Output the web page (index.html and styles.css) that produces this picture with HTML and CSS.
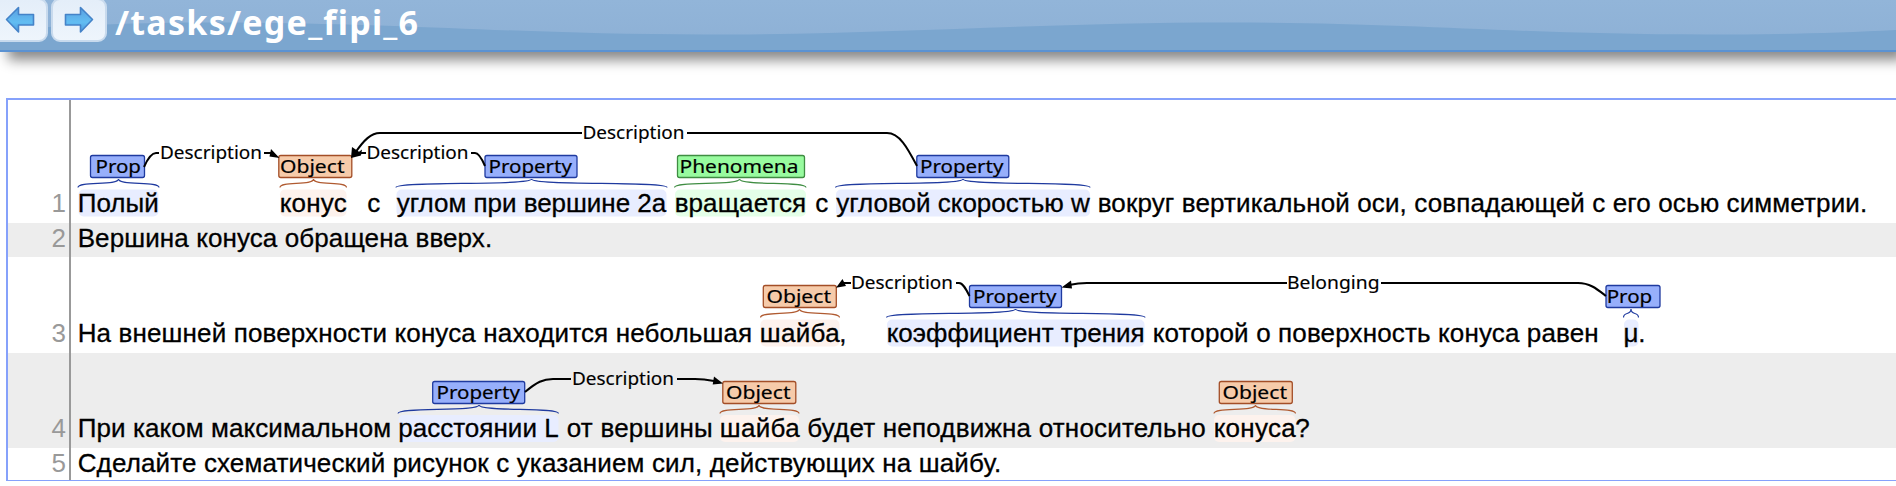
FILE: index.html
```html
<!DOCTYPE html>
<html lang="ru">
<head>
<meta charset="utf-8">
<title>/tasks/ege_fipi_6</title>
<link rel="stylesheet" href="styles.css">
</head>
<body>
<header class="header">
  <svg class="wave" viewBox="0 0 1896 50" preserveAspectRatio="none"><path d="M0 30 C70 25 140 22.500 215 22.500 C400 22.500 520 34.500 705 34.500 C900 34.500 1040 22.500 1230 22.500 C1410 22.500 1520 34.500 1707 34.500 C1780 34.500 1840 33 1896 30 V50 H0 Z"/></svg>
  <nav class="nav">
    <button class="nav-button" aria-label="Previous"><svg width="30" height="28" viewBox="0 0 30 28"><defs><linearGradient id="arrow-fill" x1="0" y1="0" x2="0" y2="1"><stop offset="0" stop-color="#5a9fe0"/><stop offset=".6" stop-color="#62bdf2"/><stop offset="1" stop-color="#4d9ae0"/></linearGradient></defs><path class="arrow" d="M1.500 13.500 L13.500 1.500 V8.500 H28.500 V19 H13.500 V26 Z"/></svg></button>
    <button class="nav-button" aria-label="Next"><svg width="30" height="28" viewBox="0 0 30 28"><path class="arrow" d="M28.500 13.500 L16.500 1.500 V8.500 H1.500 V19 H16.500 V26 Z"/></svg></button>
  </nav>
  <h1 class="title">/tasks/ege_fipi_6</h1>
</header>
<main class="document">
  <section class="row row-1">
    <div class="number">1</div>
    <svg class="sentence" viewBox="71 100 1825 123">
      <g class="property">
        <rect class="mark" x="78.500" y="189.500" width="80" height="27" rx="5"/>
        <rect class="mark" x="396.500" y="189.500" width="270" height="27" rx="5"/>
        <rect class="mark" x="836" y="189.500" width="254" height="27" rx="5"/>
        <path class="curly" d="M78 187.500 C78 181 118.500 186 118.500 179 C118.500 186 159 181 159 187.500 M396 187.500 C396 181 531.500 186 531.500 179 C531.500 186 667 181 667 187.500 M835.500 187.500 C835.500 181 963 186 963 179 C963 186 1090 181 1090 187.500"/>
        <rect class="tag" x="90.500" y="155.500" width="54" height="22" rx="2"/>
        <rect class="tag" x="485" y="155.500" width="92" height="22" rx="2"/>
        <rect class="tag" x="916.800" y="155.500" width="92" height="22" rx="2"/>
      </g>
      <g class="object">
        <rect class="mark" x="280" y="189.500" width="66.500" height="27" rx="5"/>
        <path class="curly" d="M280 187.500 C280 181 313.500 186 313.500 179 C313.500 186 346.500 181 346.500 187.500"/>
        <rect class="tag" x="278.800" y="155.500" width="73" height="22" rx="2"/>
      </g>
      <g class="phenomena">
        <rect class="mark" x="675" y="189.500" width="131" height="27" rx="5"/>
        <path class="curly" d="M674.500 187.500 C674.500 181 739.500 186 739.500 179 C739.500 186 806 181 806 187.500"/>
        <rect class="tag" x="677.500" y="155.500" width="127" height="22" rx="2"/>
      </g>
      <g class="arc">
        <path d="M144 167 C148 158 152 153 156 153 H159 M264 153 H272 M366 153 H360 M471 153 H475 C479 153 482 159 485 166"/>
        <path d="M355 153 C364 140 371 133 380 133 H582 M687 133 H887 C900 133 908 149 917 166"/>
        <path class="head" d="M279.500 158 L271 149 L269.500 156.500 Z M351 158 L362 149.500 L361 155.500 Z M351 158 L352 147 L360 152.500 Z"/>
      </g>
      <g class="label">
        <text x="95.500" y="172.700" textLength="45.500" lengthAdjust="spacingAndGlyphs">Prop</text>
        <text x="280" y="172.700" textLength="64.500" lengthAdjust="spacingAndGlyphs">Object</text>
        <text x="488.500" y="172.700" textLength="83.500" lengthAdjust="spacingAndGlyphs">Property</text>
        <text x="679.500" y="172.700" textLength="119" lengthAdjust="spacingAndGlyphs">Phenomena</text>
        <text x="920" y="172.700" textLength="83.500" lengthAdjust="spacingAndGlyphs">Property</text>
      </g>
      <g class="arc-label">
        <text x="160" y="158.700" textLength="102" lengthAdjust="spacingAndGlyphs">Description</text>
        <text x="366.500" y="158.700" textLength="102" lengthAdjust="spacingAndGlyphs">Description</text>
        <text x="582.500" y="138.700" textLength="102" lengthAdjust="spacingAndGlyphs">Description</text>
      </g>
      <g class="words">
        <text x="77" y="212" textLength="81">Полый</text>
        <text x="279" y="212" textLength="67">конус</text>
        <text x="366.500" y="212">с</text>
        <text x="396" y="212" textLength="269.500">углом при вершине 2a</text>
        <text x="674" y="212" textLength="131.500">вращается</text>
        <text x="814.500" y="212">с</text>
        <text x="835.500" y="212" textLength="253.500">угловой скоростью w</text>
        <text x="1097" y="212" textLength="769.500">вокруг вертикальной оси, совпадающей с его осью симметрии.</text>
      </g>
    </svg>
  </section>
  <section class="row row-2">
    <div class="number">2</div>
    <svg class="sentence" viewBox="71 223 1825 34">
      <g class="words"><text x="77" y="246.700" textLength="414.500">Вершина конуса обращена вверх.</text></g>
    </svg>
  </section>
  <section class="row row-3">
    <div class="number">3</div>
    <svg class="sentence" viewBox="71 257 1825 96">
      <g class="property">
        <rect class="mark" x="887" y="319.500" width="257.500" height="27" rx="5"/>
        <rect class="mark" x="1624" y="319.500" width="14.500" height="27" rx="5"/>
        <path class="curly" d="M886.500 317.500 C886.500 311 1015.500 316 1015.500 309 C1015.500 316 1145 311 1145 317.500 M1623.500 317.500 C1623.500 311 1631 316 1631 309 C1631 316 1638.500 311 1638.500 317.500"/>
        <rect class="tag" x="969.500" y="285.500" width="92" height="22" rx="2"/>
        <rect class="tag" x="1606" y="285.500" width="54" height="22" rx="2"/>
      </g>
      <g class="object">
        <rect class="mark" x="760.500" y="319.500" width="79" height="27" rx="5"/>
        <path class="curly" d="M760.500 317.500 C760.500 311 799.500 316 799.500 309 C799.500 316 839.500 311 839.500 317.500"/>
        <rect class="tag" x="763.300" y="285.500" width="73" height="22" rx="2"/>
      </g>
      <g class="arc">
        <path d="M842 283 H851 M956 283 H959 C963 283 966 289 969.500 296 M1069 285 C1076 283.500 1080 283 1087 283 H1287 M1381 283 H1578 C1590 283 1597 289 1606 296"/>
        <path class="head" d="M836 287.800 L842.500 279 L846 286 Z M1061.500 287.500 L1071 280.500 L1072 288.500 Z"/>
      </g>
      <g class="label">
        <text x="766.500" y="302.700" textLength="64.500" lengthAdjust="spacingAndGlyphs">Object</text>
        <text x="973" y="302.700" textLength="83.500" lengthAdjust="spacingAndGlyphs">Property</text>
        <text x="1606.700" y="302.700" textLength="45.500" lengthAdjust="spacingAndGlyphs">Prop</text>
      </g>
      <g class="arc-label">
        <text x="851" y="288.700" textLength="102" lengthAdjust="spacingAndGlyphs">Description</text>
        <text x="1287" y="288.700" textLength="92.500" lengthAdjust="spacingAndGlyphs">Belonging</text>
      </g>
      <g class="words">
        <text x="77" y="341.700" textLength="674.500">На внешней поверхности конуса находится небольшая</text>
        <text x="759" y="341.700" textLength="80">шайба</text>
        <text x="838.500" y="341.700">,</text>
        <text x="886" y="341.700" textLength="258">коэффициент трения</text>
        <text x="1152" y="341.700" textLength="446">которой о поверхность конуса равен</text>
        <text x="1622.800" y="341.700">μ</text>
        <text x="1637.500" y="341.700">.</text>
      </g>
    </svg>
  </section>
  <section class="row row-4">
    <div class="number">4</div>
    <svg class="sentence" viewBox="71 353 1825 95">
      <g class="property">
        <rect class="mark" x="398.500" y="415" width="160" height="27" rx="5"/>
        <path class="curly" d="M398 413.500 C398 407 479 412 479 405 C479 412 558.500 407 558.500 413.500"/>
        <rect class="tag" x="432.700" y="381.500" width="92" height="22" rx="2"/>
      </g>
      <g class="object">
        <rect class="mark" x="720" y="415" width="79" height="27" rx="5"/>
        <rect class="mark" x="1214" y="415" width="81.500" height="27" rx="5"/>
        <path class="curly" d="M720 413.500 C720 407 759 412 759 405 C759 412 799 407 799 413.500 M1214 413.500 C1214 407 1255.500 412 1255.500 405 C1255.500 412 1295.500 407 1295.500 413.500"/>
        <rect class="tag" x="722.800" y="381.500" width="73" height="22" rx="2"/>
        <rect class="tag" x="1219.300" y="381.500" width="73" height="22" rx="2"/>
      </g>
      <g class="arc">
        <path d="M525 392 C537 382 543 379 553 379 H571 M677 379 H695 C703 379 709 380 714 381"/>
        <path class="head" d="M723 383.500 L714 376.500 L712.700 384.500 Z"/>
      </g>
      <g class="label">
        <text x="436.500" y="398.700" textLength="83.500" lengthAdjust="spacingAndGlyphs">Property</text>
        <text x="726" y="398.700" textLength="64.500" lengthAdjust="spacingAndGlyphs">Object</text>
        <text x="1222.500" y="398.700" textLength="64.500" lengthAdjust="spacingAndGlyphs">Object</text>
      </g>
      <g class="arc-label"><text x="572" y="384.700" textLength="102" lengthAdjust="spacingAndGlyphs">Description</text></g>
      <g class="words">
        <text x="77" y="436.700" textLength="313.500">При каком максимальном</text>
        <text x="397.500" y="436.700" textLength="160.500">расстоянии L</text>
        <text x="566" y="436.700" textLength="146">от вершины</text>
        <text x="719" y="436.700" textLength="80">шайба</text>
        <text x="806.500" y="436.700" textLength="398.500">будет неподвижна относительно</text>
        <text x="1213" y="436.700" textLength="82">конуса</text>
        <text x="1294.500" y="436.700">?</text>
      </g>
    </svg>
  </section>
  <section class="row row-5">
    <div class="number">5</div>
    <svg class="sentence" viewBox="71 448 1825 32">
      <g class="words"><text x="77" y="471.700" textLength="923.500">Сделайте схематический рисунок с указанием сил, действующих на шайбу.</text></g>
    </svg>
  </section>
</main>
</body>
</html>
```
FILE: styles.css
```css
* { box-sizing: border-box; }
body { margin: 0; height: 486px; overflow: hidden; background: #fff; font-family: "Liberation Sans", Arial, sans-serif; }
.header { position: relative; display: flex; height: 52px; border-bottom: 2px solid #5b92d2; background: linear-gradient(#92b5d9, #8db0d5); box-shadow: 8px 8px 12px #888; }
.wave { position: absolute; inset: 0; width: 100%; height: 50px; fill: #7ba6cf; }
.nav { position: relative; display: flex; gap: 3px; height: 42px; margin-left: -8px; }
.nav-button { display: flex; justify-content: center; width: 56px; height: 44px; margin-top: -2px; padding: 6px 0 0; border: 2px solid #c8daed; border-radius: 9px; background: linear-gradient(#e4eef9, #eef5fc); }
.nav-button svg { flex: none; }
.arrow { fill: url(#arrow-fill); stroke: #4583c8; stroke-width: 1.600; stroke-linejoin: round; }
.title { position: relative; margin: 0 0 0 8px; color: #fff; font: bold 34px/45px "Noto Sans", sans-serif; letter-spacing: 1.250px; white-space: nowrap; }
.document { display: flex; flex-direction: column; width: 1900px; height: 383px; margin: 46px 0 0 6px; border: solid #86a1fb; border-width: 2px 2px 1px; }
.row { display: grid; grid-template-columns: 63px 1825px; width: 1888px; align-items: stretch; }
.row-1 { height: 123px; }
.row-2 { height: 34px; background: #ededed; }
.row-3 { height: 96px; }
.row-4 { height: 95px; background: #ededed; }
.row-5 { height: 32px; }
.number { display: flex; align-items: flex-end; justify-content: flex-end; padding: 0 3px 5px 0; border-right: 2px solid #999; color: #999; font-size: 26px; line-height: 30px; }
.row-5 .number { padding-bottom: 2px; }
.sentence { display: block; width: 1825px; height: 100%; }
.words { font-size: 26px; stroke: #000; stroke-width: .3; transform: translateX(.7px); }
.label { font: 18.500px "Noto Sans", sans-serif; stroke: #000; stroke-width: .2; }
.arc-label { font: 17.500px "Noto Sans", sans-serif; stroke: #000; stroke-width: .15; }
.curly { fill: none; stroke-width: 1.200; }
.tag { stroke-width: 1.300; }
.property .tag { fill: #97affb; stroke: #1f3a9f; }
.property .mark { fill: #e8edff; }
.property .curly { stroke: #1f3a9f; }
.object .tag { fill: #f6cbaa; stroke: #a34e27; }
.object .mark { fill: #fdf2ed; }
.object .curly { stroke: #b05a30; }
.phenomena .tag { fill: #98fb9f; stroke: #3f8d42; }
.phenomena .mark { fill: #e4ffe8; }
.phenomena .curly { stroke: #3f8d42; }
.arc path { fill: none; stroke: #000; stroke-width: 2; }
.arc .head { fill: #000; stroke: none; }
```
